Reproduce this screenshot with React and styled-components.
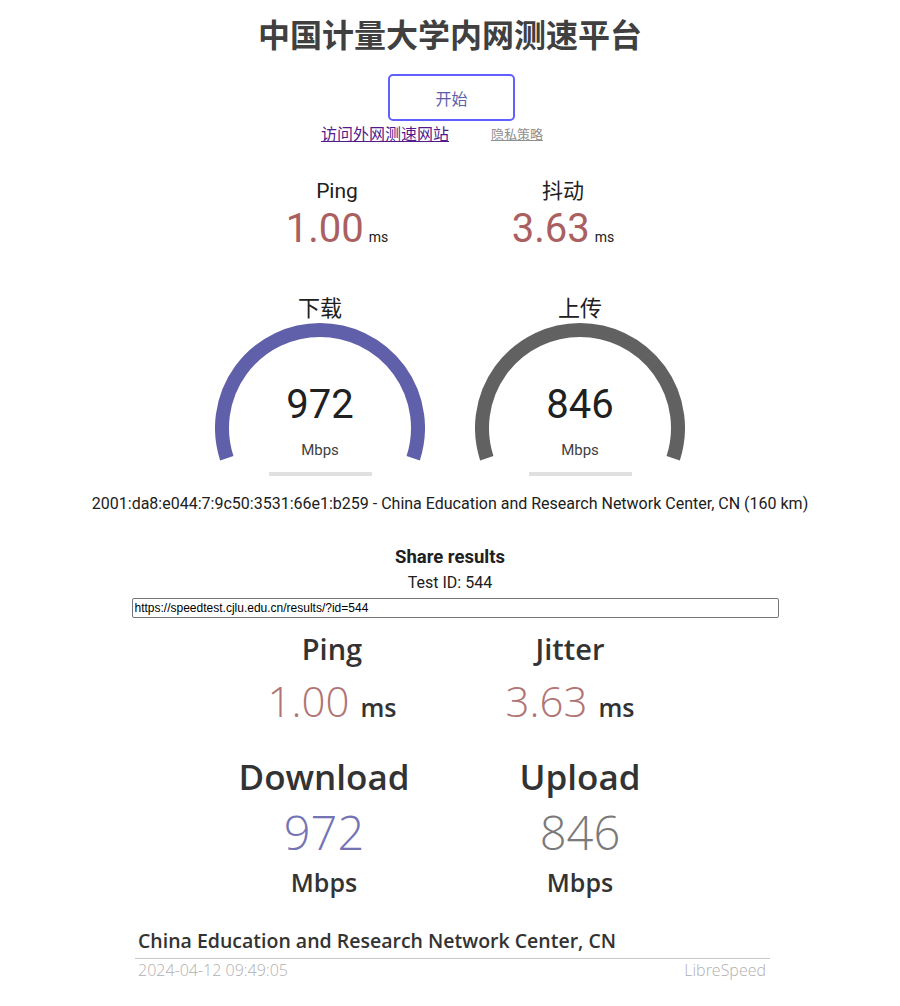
import styled, { createGlobalStyle } from 'styled-components'

const GlobalStyle = createGlobalStyle`
    body {
        margin: 0;
        background: #ffffff;
        font-family: Roboto, "Noto Sans CJK SC", sans-serif;
        color: #202020;
    }
`

const Page = styled.div`
    width: 900px;
    display: flex;
    flex-direction: column;
    align-items: center;
    text-align: center;
`

const Title = styled.h1`
    margin: 14px 0 0;
    font-family: "Noto Sans CJK SC", sans-serif;
    font-size: 32px;
    line-height: 38px;
    font-weight: 700;
    color: #404040;
`

const StartButton = styled.div`
    margin: 22px 0 0 3px;
    width: 123px;
    height: 43px;
    display: flex;
    align-items: center;
    justify-content: center;
    border: 2px solid #6060ff;
    border-radius: 5px;
    color: #6060aa;
    font-family: "Noto Sans CJK SC", sans-serif;
    font-size: 16px;
`

const LinkRow = styled.div`
    margin-top: 2px;
    display: flex;
    align-items: center;
    gap: 42px;
    padding-right: 36px;
    height: 20px;
`

const Link = styled.a`
    font-family: "Noto Sans CJK SC", sans-serif;
    font-size: ${p => p.$small ? '13px' : '16px'};
    color: ${p => p.$small ? '#909090' : '#551a8b'};
    text-decoration: underline;
`

const TestGroup = styled.div`
    display: flex;
    margin-top: ${p => p.$top}px;
`

const TestArea = styled.div`
    width: ${p => p.$w}px;
    display: flex;
    flex-direction: column;
    align-items: center;
`

const TestName = styled.div`
    font-family: Roboto, "Noto Sans CJK SC", sans-serif;
    font-size: ${p => p.$size}px;
    line-height: ${p => p.$lh}px;
    color: #202020;
`

const MeterRow = styled.div`
    display: flex;
    align-items: baseline;
    height: 48px;
    margin-top: 2px;
`

const MeterValue = styled.span`
    font-size: 40px;
    line-height: 48px;
    color: #aa6060;
`

const MeterUnit = styled.span`
    margin-left: 5px;
    font-size: 14px;
    color: #202020;
`

const GaugeBox = styled.div`
    position: relative;
    width: 210px;
    height: 150px;
    display: flex;
    flex-direction: column;
    align-items: center;
`

const GaugeSvg = styled.svg`
    position: absolute;
    inset: 0;
`

const GaugeValue = styled.div`
    position: relative;
    margin-top: 60px;
    font-size: 40px;
    line-height: 48px;
    color: #202020;
`

const GaugeUnit = styled.div`
    position: relative;
    margin-top: 12px;
    font-size: 15px;
    line-height: 18px;
    color: #404040;
`

const ProgressBar = styled.div`
    margin-top: 1px;
    width: 103px;
    height: 4px;
    background: #e0e0e0;
`

const IpLine = styled.div`
    margin-top: 18px;
    font-size: 16px;
    line-height: 20px;
    color: #202020;
`

const ShareTitle = styled.div`
    margin-top: 32px;
    font-size: 18.5px;
    line-height: 22px;
    font-weight: 700;
    color: #202020;
`

const TestId = styled.div`
    margin-top: 6px;
    font-size: 16px;
    line-height: 18px;
    color: #202020;
`

const ShareInput = styled.input`
    margin: 6px 0 0 10px;
    width: 647px;
    height: 20px;
    box-sizing: border-box;
    padding: 0 2px;
    border: 1px solid #767676;
    border-radius: 2px;
    font-family: "Liberation Sans", Arial, sans-serif;
    font-size: 12px;
    color: #000;
`

const ResultCard = styled.div`
    width: 640px;
    font-family: "Open Sans", sans-serif;
    display: flex;
    flex-direction: column;
    align-items: center;
`

const ResultRow = styled.div`
    display: grid;
    grid-template-columns: ${p => p.$cols};
    margin: ${p => p.$top}px 0 0 ${p => p.$shift || 0}px;
`

const ResultCell = styled.div`
    display: flex;
    flex-direction: column;
    align-items: center;
`

const ResultLabel = styled.div`
    font-size: ${p => p.$size}px;
    line-height: ${p => p.$lh}px;
    margin-top: ${p => p.$top || 0}px;
    font-weight: 600;
    color: #333333;
`

const ResultValueRow = styled.div`
    display: flex;
    align-items: baseline;
    gap: 11px;
    margin-top: ${p => p.$top}px;
`

const ResultValue = styled.span`
    font-size: ${p => p.$size}px;
    line-height: ${p => p.$lh}px;
    font-weight: 300;
    color: ${p => p.$color};
`

const ResultUnit = styled.span`
    font-size: ${p => p.$size}px;
    line-height: ${p => p.$lh}px;
    font-weight: 600;
    color: #333333;
`

const Footer = styled.div`
    align-self: stretch;
    margin: 30px 0 0 5px;
    text-align: left;
`

const IspName = styled.div`
    font-size: 19.5px;
    line-height: 26px;
    font-weight: 600;
    color: #333333;
    padding: 0 0 4px 3px;
    border-bottom: 1px solid #c8c8c8;
`

const FooterMeta = styled.div`
    display: flex;
    justify-content: space-between;
    font-size: 16px;
    line-height: 22px;
    font-weight: 300;
    color: #b0b0b0;
    padding: 0 4px 0 3px;
`

function Gauge({ color }) {
    const cx = 105
    const cy = 107
    const r = 98
    const x0 = cx - r * Math.cos(Math.PI * 0.1)
    const x1 = cx + r * Math.cos(Math.PI * 0.1)
    const y = cy + r * Math.sin(Math.PI * 0.1)
    return (
        <GaugeSvg width="210" height="150" viewBox="0 0 210 150">
            <path
                d={`M ${x0} ${y} A ${r} ${r} 0 1 1 ${x1} ${y}`}
                fill="none"
                stroke={color}
                strokeWidth="14"
            />
        </GaugeSvg>
    )
}

export default function App() {
    return (
        <>
            <GlobalStyle />
            <Page>
                <Title>中国计量大学内网测速平台</Title>
                <StartButton>开始</StartButton>
                <LinkRow>
                    <Link href="#">访问外网测速网站</Link>
                    <Link href="#" $small>隐私策略</Link>
                </LinkRow>

                <TestGroup $top={36}>
                    <TestArea $w={226}>
                        <TestName $size={21} $lh={24}>Ping</TestName>
                        <MeterRow>
                            <MeterValue>1.00</MeterValue>
                            <MeterUnit>ms</MeterUnit>
                        </MeterRow>
                    </TestArea>
                    <TestArea $w={226}>
                        <TestName $size={21} $lh={24}>抖动</TestName>
                        <MeterRow>
                            <MeterValue>3.63</MeterValue>
                            <MeterUnit>ms</MeterUnit>
                        </MeterRow>
                    </TestArea>
                </TestGroup>

                <TestGroup $top={44}>
                    <TestArea $w={260}>
                        <TestName $size={22} $lh={24}>下载</TestName>
                        <GaugeBox>
                            <Gauge color="#6060aa" />
                            <GaugeValue>972</GaugeValue>
                            <GaugeUnit>Mbps</GaugeUnit>
                        </GaugeBox>
                        <ProgressBar />
                    </TestArea>
                    <TestArea $w={260}>
                        <TestName $size={22} $lh={24}>上传</TestName>
                        <GaugeBox>
                            <Gauge color="#616161" />
                            <GaugeValue>846</GaugeValue>
                            <GaugeUnit>Mbps</GaugeUnit>
                        </GaugeBox>
                        <ProgressBar />
                    </TestArea>
                </TestGroup>

                <IpLine>2001:da8:e044:7:9c50:3531:66e1:b259 - China Education and Research Network Center, CN (160 km)</IpLine>

                <ShareTitle>Share results</ShareTitle>
                <TestId>Test ID: 544</TestId>
                <ShareInput readOnly value="https://speedtest.cjlu.edu.cn/results/?id=544" />

                <ResultCard>
                    <ResultRow $cols="240px 236px" $top={11}>
                        <ResultCell>
                            <ResultLabel $size={29} $lh={40}>Ping</ResultLabel>
                            <ResultValueRow $top={6}>
                                <ResultValue $size={42} $lh={52} $color="#b07474">1.00</ResultValue>
                                <ResultUnit $size={25} $lh={30}>ms</ResultUnit>
                            </ResultValueRow>
                        </ResultCell>
                        <ResultCell>
                            <ResultLabel $size={29} $lh={40}>Jitter</ResultLabel>
                            <ResultValueRow $top={6}>
                                <ResultValue $size={42} $lh={52} $color="#b07474">3.63</ResultValue>
                                <ResultUnit $size={25} $lh={30}>ms</ResultUnit>
                            </ResultValueRow>
                        </ResultCell>
                    </ResultRow>
                    <ResultRow $cols="256px 256px" $top={28} $shift={4}>
                        <ResultCell>
                            <ResultLabel $size={35} $lh={44}>Download</ResultLabel>
                            <ResultValueRow $top={5}>
                                <ResultValue $size={47} $lh={56} $color="#7474b4">972</ResultValue>
                            </ResultValueRow>
                            <ResultLabel $size={25} $lh={32} $top={6}>Mbps</ResultLabel>
                        </ResultCell>
                        <ResultCell>
                            <ResultLabel $size={35} $lh={44}>Upload</ResultLabel>
                            <ResultValueRow $top={5}>
                                <ResultValue $size={47} $lh={56} $color="#7a7a7a">846</ResultValue>
                            </ResultValueRow>
                            <ResultLabel $size={25} $lh={32} $top={6}>Mbps</ResultLabel>
                        </ResultCell>
                    </ResultRow>
                    <Footer>
                        <IspName>China Education and Research Network Center, CN</IspName>
                        <FooterMeta>
                            <span>2024-04-12 09:49:05</span>
                            <span>LibreSpeed</span>
                        </FooterMeta>
                    </Footer>
                </ResultCard>
            </Page>
        </>
    )
}
